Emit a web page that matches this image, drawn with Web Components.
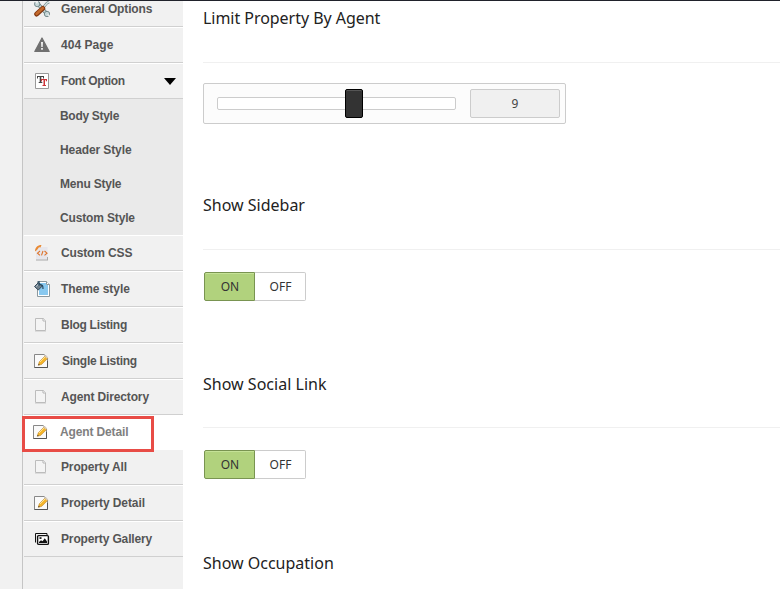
<!DOCTYPE html>
<html lang="en"><head><meta charset="utf-8"><title>Theme Options</title>
<style>html,body{margin:0;height:100%;overflow:hidden;background:#fff}</style></head><body>
<options-page></options-page>
<script>
const pencil = `<path d="M.5 1.500h9.500l3.500 3v10H.5z" fill="#fafafa" stroke="#888"/><path d="M.5 14.500h13V8" fill="none" stroke="#555"/><path d="M4.300 12.300l1-3.500 5.800-5.800 2.500 2.500-5.800 5.800z" fill="#f5b52b" stroke="#bd8428" stroke-width=".6"/><path d="M6 9l5.500-5.500" stroke="#ffe691"/><path d="M10.600 3.300l1.300-1.300 2.300 2.500-1.300 1.300z" fill="#d8cbb8"/><path d="M4.300 12.300l.4-1.600 1.200 1.200z" fill="#333"/>`;
const page = `<path d="M1.500 1.500h8l2 2.500v9.500h-10z" fill="#f4f4f4" stroke="#bcbcbc"/><path d="M9 1.500v2.500h2.500" fill="#fff" stroke="#b5b5b5"/><path d="M1 14.500h11" stroke="#dcdcdc"/>`;
const icons = {
 tools:`<path d="M3 2l10 11" stroke="#61777a" stroke-width="3.600"/><path d="M3 2l10 11" stroke="#c5d7d8" stroke-width="2.200"/><circle cx="3.200" cy="3" r="2.700" fill="#c5d7d8" stroke="#61777a" stroke-width=".8"/><path d="M0 0l3 3 1.500-3z" fill="#f1f1f1"/><circle cx="13" cy="13" r="2.700" fill="#c5d7d8" stroke="#61777a" stroke-width=".8"/><path d="M13 13l3 1-1 2z" fill="#f1f1f1"/><path d="M8 8l5-6 2-1" fill="none" stroke="#688080" stroke-width="2.600"/><path d="M8 8l5-6 2-1" fill="none" stroke="#d6e2e2" stroke-width="1.400"/><path d="M2.700 13l6-5.500" stroke="#843911" stroke-width="5" stroke-linecap="round"/><path d="M2.700 12.700l6-5.500" stroke="#c46a2c" stroke-width="2.800" stroke-linecap="round"/>`,
 warning:`<path d="M8 1L15.200 14.500H.8z" fill="#707070" stroke="#707070" stroke-width="1.200" stroke-linejoin="round"/><path d="M7 5h2l-.3 5H7.300zM7.100 11h1.800v1.800H7.100z" fill="#f1f1f1"/>`,
 font:`<path d="M1.500 .5h13v15h-13z" fill="#fff" stroke="#999"/><path d="M3 3h7v2.500H9V4H7.300v5h1v1H4.700v-1h1V4H4v1.500H3z" fill="#444"/><path d="M7 6h6v2.300h-1.200V7h-.8v5h1v1H8.500v-1h1V7H8v1.300H7z" fill="#ce3338"/>`,
 code:`<path d="M3 2h10.500v12.500H2V7z" fill="#e6e6ec"/><path d="M2 15h12M13.500 12v3" stroke="#aaa"/><path d="M6 6L3.500 8.200 6 10.400M10.500 6L13 8.200l-2.500 2.200M9 6l-1.500 4.400" fill="none" stroke="#de742b" stroke-width="1.100"/><path d="M1 6.500C1 2.500 3.500 0 7.500 0L6.500 2.500 5 2.300 3 5z" fill="#e98a34"/>`,
 theme:`<path d="M3.500 .5h9l3 3v12h-12z" fill="#fff" stroke="#8b989e"/><path d="M5 2h7v2h2v10H5z" fill="#88c8ef"/><path d="M12.500 .5v3h3" fill="#fff" stroke="#8b989e"/><path d="M.5 5.500L4.500 1.500l3.800 3.500-4 4z" fill="#72818c" stroke="#34495a"/><path d="M2.200 5.500L4.600 3.200" stroke="#c5d0d6"/><path d="M5 0v4c4-1 4 1 4 4" fill="none" stroke="#25475e" stroke-width="1.200"/>`,
 page, pencil,
 gallery:`<path d="M1.500 11.500v-9h11.500v1.500" fill="none" stroke="#111" stroke-linejoin="round"/><rect x="3.600" y="4.600" width="10.800" height="8.800" rx="1" fill="#fff" stroke="#111" stroke-width="1.400"/><path d="M5 12v-1l2-1.800 1.500 1 2.300-3L13 10.500V12z" fill="#111"/><rect x="5.500" y="6.200" width="2" height="1.700" fill="#111"/>`
};
function define(name, template, setup){
 customElements.define(name, class extends HTMLElement{
  connectedCallback(){ if(this.shadowRoot) return; this.attachShadow({mode:'open'}).innerHTML=template; setup&&setup(this,this.shadowRoot); }
 });
}
define('nav-item',`<style>
:host{display:flex;box-sizing:border-box;height:36px;align-items:center;border-top:1px solid #fff;border-bottom:1px solid #d0d0d0;margin-left:1px;padding-left:10px;font:bold 12px/16px "Liberation Sans",Arial,sans-serif;letter-spacing:var(--tracking,-.14px);color:#555;white-space:nowrap}
svg{width:16px;height:16px;flex:none;margin-right:11px}
.arrow{margin-left:auto;margin-right:7px;width:0;border:6px solid transparent;border-top:7px solid #000;border-bottom:0}
:host([active]){height:35px;background:#fff;border:0;padding-bottom:2px;color:#808080;margin-left:0}
:host([after]){height:35px;border-top:0}
:host([sub]){height:34px;border:0;background:#eaeaea;padding-left:37px;margin-left:0;letter-spacing:var(--tracking,-.2px)}
</style><svg viewBox="0 0 16 16" fill="none"></svg><span><slot></slot></span>`,(h,r)=>{
 const i=h.getAttribute('icon'),s=r.querySelector('svg'); if(i)s.innerHTML=icons[i];else s.remove();
 if(h.hasAttribute('expanded')) r.innerHTML+='<i class="arrow"></i>';
});
define('side-nav',`<style>:host{display:block;box-sizing:border-box;width:161px;height:589px;overflow:hidden;border-left:1px solid #c5c5c5;background:#f1f1f1}
nav{margin-top:-9px}</style><nav><slot></slot></nav>`);
define('option-section',`<style>:host{display:flex;flex-direction:column;font:16px/22px "Noto Sans","Segoe UI",sans-serif;color:#222}
h2{font:inherit;margin:0 0 var(--rule-gap,33px);letter-spacing:var(--heading-spacing,0)}hr{width:100%;height:1px;margin:0;border:0;background:#f0f0f0}div{padding-top:var(--control-gap,22px)}</style><h2></h2><hr><div><slot></slot></div>`,(h,r)=>r.querySelector('h2').textContent=h.getAttribute('heading'));
define('range-control',`<style>:host{box-sizing:border-box;display:flex;align-items:center;width:363px;height:41px;border:1px solid #ccc;border-radius:2px;background:#fcfcfc;padding:0 5px 0 13px;font:12px/16px "Noto Sans",sans-serif;color:#444}
.track{box-sizing:border-box;display:flex;align-items:center;width:239px;height:13px;border:1px solid #ccc;border-radius:2px;background:#fff}.thumb{box-sizing:border-box;flex:none;width:18px;height:29px;margin-left:127px;border:1px solid #000;border-radius:2px;background:#333;box-shadow:inset 0 1px #555}
output{box-sizing:border-box;margin-left:auto;width:90px;height:29px;border:1px solid #ccc;border-radius:2px;background:#f0f0f0;display:grid;place-items:center}</style><div class="track"><div class="thumb"></div></div><output><slot></slot></output>`);
define('on-off',`<style>:host{display:flex;margin-left:1px;width:102px;height:29px;font:12px/16px "Noto Sans",sans-serif;color:#333}span{box-sizing:border-box;display:grid;place-items:center;border:1px solid #ccc;width:51px}.on{padding-left:1px;border-color:#799451;border-radius:2px 0 0 2px;background:#b1d27d;box-shadow:inset 0 1px #c5e297}.off{padding-left:1px;border-left:0;border-radius:0 2px 2px 0;background:#fff}</style><span class="on">ON</span><span class="off">OFF</span>`);
define('options-page',`<style>
:host{display:grid;grid-template-columns:22px 161px 1fr;width:780px;height:589px;overflow:hidden;position:relative;background:linear-gradient(90deg,#f1f1f1 22px,#fff 22px)}
side-nav{grid-column:2}main{padding:7px 0 0 20px;min-width:0}option-section{height:179px}option-section:first-child{height:187px;--control-gap:20px;--heading-spacing:-.04px}option-section:nth-child(3){--rule-gap:32px;--heading-spacing:.02px}
.topline{position:absolute;top:0;left:0;right:0;height:1px;background:#20222b}.marker{position:absolute;box-sizing:border-box;left:22px;top:416px;width:132px;height:36px;border:3px solid #e84c46}
</style>
<side-nav>
<nav-item icon="tools">General Options</nav-item><nav-item icon="warning" style="--tracking:.05px">404 Page</nav-item><nav-item icon="font" expanded style="--tracking:-.4px">Font Option</nav-item>
<nav-item sub style="--tracking:-.3px">Body Style</nav-item><nav-item sub style="--tracking:-.1px">Header Style</nav-item><nav-item sub>Menu Style</nav-item><nav-item sub style="--tracking:-.15px">Custom Style</nav-item>
<nav-item icon="code">Custom CSS</nav-item><nav-item icon="theme" style="--tracking:-.05px">Theme style</nav-item><nav-item icon="page" style="--tracking:-.28px">Blog Listing</nav-item><nav-item icon="pencil" style="--tracking:-.27px"><span style="margin-left:1px">Single Listing</span></nav-item><nav-item icon="page">Agent Directory</nav-item><nav-item icon="pencil" active>Agent Detail</nav-item><nav-item icon="page" after>Property All</nav-item><nav-item icon="pencil" style="--tracking:-.1px">Property Detail</nav-item><nav-item icon="gallery">Property Gallery</nav-item>
</side-nav>
<main><option-section heading="Limit Property By Agent"><range-control>9</range-control></option-section>
<option-section heading="Show Sidebar"><on-off></on-off></option-section><option-section heading="Show Social Link"><on-off></on-off></option-section><option-section heading="Show Occupation"></option-section></main>
<div class="topline"></div><div class="marker"></div>`);
</script></body></html>
